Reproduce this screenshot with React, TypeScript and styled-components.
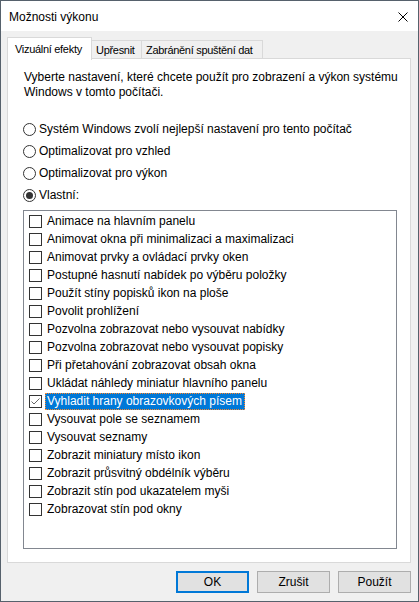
import React from "react";
import styled, { createGlobalStyle } from "styled-components";

const Global = createGlobalStyle`
  html, body { margin: 0; padding: 0; background: #ffffff; }
  * { box-sizing: border-box; }
  body { font-family: "Liberation Sans", Arial, sans-serif; font-size: 12px; color: #000; }
`;

const Window = styled.div`
  width: 419px;
  height: 602px;
  border: 1px solid #56616c;
  background: #f0f0f0;
  display: flex;
  flex-direction: column;
`;

const TitleBar = styled.div`
  height: 30px;
  background: #ffffff;
  display: flex;
  align-items: center;
  justify-content: space-between;
  padding: 0 10px 0 8px;
  flex-shrink: 0;
`;

const Title = styled.span`
  font-size: 12px;
  padding-top: 1px;
`;

const CloseBtn = styled.div`
  width: 10px;
  height: 10px;
  display: flex;
  margin-top: 1px;
`;

const Body = styled.div`
  flex: 1;
  display: flex;
  flex-direction: column;
  padding: 6px 7px 0 6px;
`;

const TabStrip = styled.div`
  height: 22px;
  display: flex;
  align-items: flex-end;
  position: relative;
  z-index: 1;
`;

const Tab = styled.div<{ $active?: boolean; $w: number }>`
  width: ${(p) => p.$w}px;
  height: ${(p) => (p.$active ? "23px" : "19px")};
  margin-bottom: ${(p) => (p.$active ? "-1px" : "0")};
  background: ${(p) => (p.$active ? "#ffffff" : "#f0f0f0")};
  border: 1px solid #d9d9d9;
  border-bottom: ${(p) => (p.$active ? "none" : "1px solid #d9d9d9")};
  border-left: ${(p) => (p.$active ? "1px solid #d9d9d9" : "none")};
  padding: ${(p) => (p.$active ? "4px 0 0 7px" : "2px 0 0 4px")};
  white-space: nowrap;
  font-size: 11px;
  line-height: 14px;
  letter-spacing: -0.3px;
`;

const Panel = styled.div`
  height: 505px;
  background: #ffffff;
  border: 1px solid #d9d9d9;
  margin-top: -1px;
  padding: 11px 13px 0 15px;
  display: flex;
  flex-direction: column;
`;

const DescLine = styled.div`
  margin-left: 1px;
  line-height: 15px;
  white-space: nowrap;
`;

const RadioGroup = styled.div`
  display: flex;
  flex-direction: column;
  margin-top: 18px;
`;

const RadioRow = styled.label`
  height: 22px;
  display: flex;
  align-items: center;
  gap: 3px;
`;

const RadioCircle = styled.span<{ $checked?: boolean }>`
  width: 13px;
  height: 13px;
  border-radius: 50%;
  border: 1px solid #333333;
  background: #ffffff;
  display: flex;
  align-items: center;
  justify-content: center;
  flex-shrink: 0;
  &::after {
    content: "";
    width: 7px;
    height: 7px;
    border-radius: 50%;
    background: #333333;
    display: ${(p) => (p.$checked ? "block" : "none")};
  }
`;

const ListBox = styled.div`
  margin-top: 4px;
  height: 339px;
  border: 1px solid #828790;
  padding: 1px 0 0 5px;
  display: flex;
  flex-direction: column;
`;

const Item = styled.div`
  height: 18px;
  display: flex;
  align-items: center;
  gap: 3px;
`;

const CheckBox = styled.span`
  width: 13px;
  height: 13px;
  border: 1px solid #333333;
  background: #ffffff;
  display: flex;
  align-items: center;
  justify-content: center;
  flex-shrink: 0;
`;

const ItemLabel = styled.span<{ $selected?: boolean }>`
  height: 17px;
  line-height: 15px;
  padding: 0 2px 0 1px;
  white-space: nowrap;
  background: ${(p) => (p.$selected ? "#0078d7" : "transparent")};
  color: ${(p) => (p.$selected ? "#ffffff" : "#000000")};
  border: 1px ${(p) => (p.$selected ? "dotted #ff8728" : "solid transparent")};
`;

const ButtonRow = styled.div`
  display: flex;
  justify-content: flex-end;
  gap: 8px;
  margin-top: 8px;
`;

const Button = styled.div<{ $default?: boolean }>`
  width: 73px;
  height: 22px;
  background: #e1e1e1;
  border: ${(p) => (p.$default ? "2px solid #0078d7" : "1px solid #adadad")};
  display: flex;
  align-items: center;
  justify-content: center;
`;

const items = [
  "Animace na hlavním panelu",
  "Animovat okna při minimalizaci a maximalizaci",
  "Animovat prvky a ovládací prvky oken",
  "Postupné hasnutí nabídek po výběru položky",
  "Použít stíny popisků ikon na ploše",
  "Povolit prohlížení",
  "Pozvolna zobrazovat nebo vysouvat nabídky",
  "Pozvolna zobrazovat nebo vysouvat popisky",
  "Při přetahování zobrazovat obsah okna",
  "Ukládat náhledy miniatur hlavního panelu",
  "Vyhladit hrany obrazovkových písem",
  "Vysouvat pole se seznamem",
  "Vysouvat seznamy",
  "Zobrazit miniatury místo ikon",
  "Zobrazit průsvitný obdélník výběru",
  "Zobrazit stín pod ukazatelem myši",
  "Zobrazovat stín pod okny",
];

const radios = [
  "Systém Windows zvolí nejlepší nastavení pro tento počítač",
  "Optimalizovat pro vzhled",
  "Optimalizovat pro výkon",
  "Vlastní:",
];

const tabs = [
  { label: "Vizuální efekty", w: 85 },
  { label: "Upřesnit", w: 50 },
  { label: "Zabránění spuštění dat", w: 121 },
];

export default function App() {
  return (
    <>
      <Global />
      <Window>
        <TitleBar>
          <Title>Možnosti výkonu</Title>
          <CloseBtn>
            <svg width="10" height="10" viewBox="0 0 10 10">
              <path d="M0.5 0.5 L9.5 9.5 M9.5 0.5 L0.5 9.5" stroke="#000" strokeWidth="1" fill="none" />
            </svg>
          </CloseBtn>
        </TitleBar>
        <Body>
          <TabStrip>
            {tabs.map((t, i) => (
              <Tab key={t.label} $active={i === 0} $w={t.w}>
                {t.label}
              </Tab>
            ))}
          </TabStrip>
          <Panel>
            <DescLine>Vyberte nastavení, které chcete použít pro zobrazení a výkon systému</DescLine>
            <DescLine>Windows v tomto počítači.</DescLine>
            <RadioGroup>
              {radios.map((r, i) => (
                <RadioRow key={r}>
                  <RadioCircle $checked={i === 3} />
                  <span>{r}</span>
                </RadioRow>
              ))}
            </RadioGroup>
            <ListBox>
              {items.map((it, i) => (
                <Item key={it}>
                  <CheckBox>
                    {i === 10 && (
                      <svg width="11" height="11" viewBox="0 0 11 11">
                        <path d="M1.5 5.5 L4 8 L9.5 2.5" stroke="#666" strokeWidth="1" fill="none" />
                      </svg>
                    )}
                  </CheckBox>
                  <ItemLabel $selected={i === 10}>{it}</ItemLabel>
                </Item>
              ))}
            </ListBox>
          </Panel>
          <ButtonRow>
            <Button $default>OK</Button>
            <Button>Zrušit</Button>
            <Button>Použít</Button>
          </ButtonRow>
        </Body>
      </Window>
    </>
  );
}
